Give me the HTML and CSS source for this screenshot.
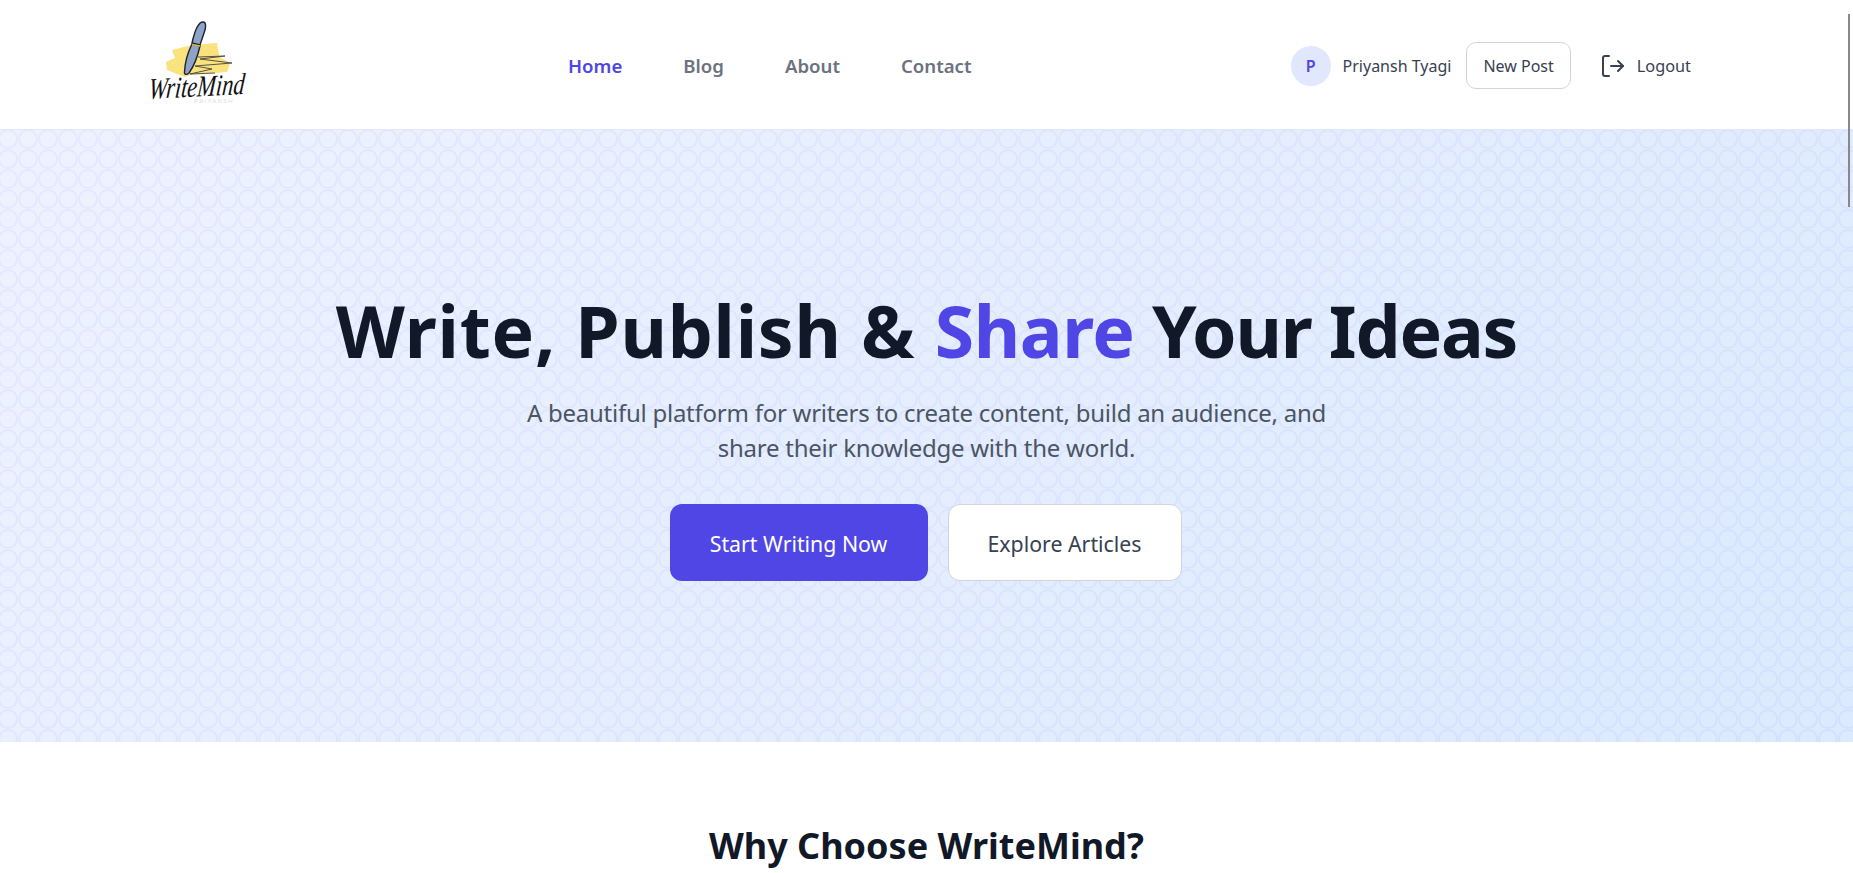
FILE: index.html
```html
<!DOCTYPE html>
<html lang="en">
<head>
<meta charset="utf-8">
<title>WriteMind</title>
<link rel="stylesheet" href="styles.css">
</head>
<body>
<header class="site-header">
  <a class="logo" href="#">
    <svg class="logo-svg" width="104" height="129" viewBox="0 0 104 129">
      <path class="logo-wash" d="M26 50 L46 45 L71 43 L72 50 L74 57 L84 63 L81 72 L44 75 L39 77 L21 70 L20 62 L29 58 Z"/>
      <path class="logo-scribble" d="M52 57 L79 56 L54 59 L86 63 L49 66 L66 69 L44 74 L69 73"/>
      <path class="logo-pen" d="M46 44 L54 46 C52 55 48 66 43 73 C41 75 38 75 38.5 72 C39 62 42 52 46 44 Z"/>
      <path class="logo-pen" d="M57 22 C60 22 60 26 59 30 L54 45 L46 43 C48 34 52 22 57 22 Z"/>
      <path class="logo-band" d="M46 44.5 L54 46"/>
      <text class="logo-word" x="0" y="0" transform="translate(2 99) rotate(-3) skewX(-8)" textLength="96" lengthAdjust="spacingAndGlyphs">WriteMind</text>
      <text class="logo-sub" x="48" y="103">PRIYANSH</text>
    </svg>
  </a>
  <nav class="main-nav">
    <a class="nav-link is-active" href="#">Home</a>
    <a class="nav-link" href="#">Blog</a>
    <a class="nav-link" href="#">About</a>
    <a class="nav-link" href="#">Contact</a>
  </nav>
  <div class="user-area">
    <span class="avatar">P</span>
    <span class="user-name">Priyansh Tyagi</span>
    <a class="new-post" href="#">New Post</a>
    <a class="logout" href="#">
      <svg width="24" height="24" viewBox="0 0 24 24" fill="none" stroke="currentColor" stroke-width="2" stroke-linecap="round" stroke-linejoin="round"><path d="M8 2H4a2 2 0 0 0-2 2v16a2 2 0 0 0 2 2h4"/><path d="M10 12h12"/><path d="M17 7l5 5-5 5"/></svg>
      <span class="logout-text">Logout</span>
    </a>
  </div>
</header>
<section class="hero">
  <h1 class="hero-title"><span class="title-lead">Write, Publish &amp; </span><span class="accent">Share</span><span class="title-tail"> Your Ideas</span></h1>
  <p class="hero-text">A beautiful platform for writers to create content, build an audience, and share their knowledge with the world.</p>
  <div class="hero-actions">
    <a class="btn btn-primary" href="#">Start Writing Now</a>
    <a class="btn btn-secondary" href="#">Explore Articles</a>
  </div>
</section>
<section class="features">
  <h2 class="features-title">Why Choose WriteMind?</h2>
</section>
<div class="scroll-thumb"></div>
</body>
</html>
```
FILE: styles.css
```css
* { box-sizing: border-box; }
html, body { height: 100%; }
body {
  margin: 0;
  overflow: hidden;
  background: #fff;
  font-family: "Noto Sans", "Open Sans", sans-serif;
  color: #111827;
}
a { text-decoration: none; color: inherit; }

.site-header {
  height: 129px;
  display: flex;
  align-items: center;
  padding: 2px 162px 0 146px;
  background: #fff;
}
.logo { display: flex; margin-top: -2px; }
.logo-svg { display: block; overflow: visible; }
.logo-wash { fill: #fae27c; }
.logo-scribble { fill: none; stroke: #444; stroke-width: .9; }
.logo-pen { fill: #8ea3c8; stroke: #1c2230; stroke-width: 1.4; }
.logo-band { stroke: #e0b93a; stroke-width: 1.6; }
.logo-word { font-family: "Liberation Serif", serif; font-style: italic; font-size: 30px; fill: #111; }
.logo-sub { font-family: "Liberation Sans", sans-serif; font-size: 6px; letter-spacing: 1.2px; fill: #ddd; }

.main-nav { display: flex; gap: 61px; font-size: 18.6px; font-weight: 600; color: #6b7280; margin-left: 318px; }
.nav-link.is-active { color: #4f46e5; }

.user-area { display: flex; align-items: center; margin-left: auto; font-size: 16px; color: #374151; }
.avatar {
  width: 40px; height: 40px; border-radius: 50%;
  display: flex; align-items: center; justify-content: center;
  background: #e0e7ff; color: #4f46e5; font-weight: 600;
}
.user-name { margin-left: 12px; }
.new-post {
  margin-left: 15px;
  height: 47px;
  padding: 0 16px;
  display: flex; align-items: center;
  border: 1px solid #d1d5db;
  border-radius: 10px;
  background: #fff;
}
.logout { display: flex; align-items: center; gap: 12px; margin-left: 30px; }
.logout-text { font-size: 16.3px; }

.hero {
  height: 613px;
  padding-top: 156px;
  display: flex; flex-direction: column; align-items: center;
  border-top: 1px solid #e0e7ff;
  background-color: #e4eaff;
  background-image:
    url("data:image/svg+xml,%3Csvg xmlns='http://www.w3.org/2000/svg' width='20' height='20'%3E%3Ccircle cx='10' cy='10' r='9' fill='none' stroke='%234f46e5' stroke-opacity='.06' stroke-width='2'/%3E%3C/svg%3E"),
    linear-gradient(135deg, #eef2ff, #dbeafe);
  background-position: -2px -1px, 0 0;
}
.hero-title { margin: 0; font-size: 71.5px; line-height: 90px; font-weight: 700; color: #111827; white-space: pre; }
.title-lead { letter-spacing: 0.74px; }
.title-tail { letter-spacing: -1.2px; }
.accent { color: #4f46e5; letter-spacing: -0.4px; }
.hero-text { margin: 19px 0 0; width: 820px; text-align: center; font-size: 24px; line-height: 35px; letter-spacing: -0.25px; color: #4b5563; }
.hero-actions { display: flex; gap: 20px; margin-top: 39px; margin-left: -2px; }
.btn {
  height: 77px; padding-top: 2px; display: flex; align-items: center; justify-content: center;
  border-radius: 12px; font-size: 21.3px;
}
.btn-primary { width: 258px; background: #4f46e5; color: #fff; }
.btn-secondary { width: 234px; background: #fff; color: #374151; border: 1px solid #d1d5db; }

.features { padding-top: 79px; text-align: center; }
.features-title { margin: 0; font-size: 36px; line-height: 50px; font-weight: 700; color: #111827; }

.scroll-thumb {
  position: absolute; left: 1848px; top: 14px; width: 2px; height: 193px; background: #888;
}
```
